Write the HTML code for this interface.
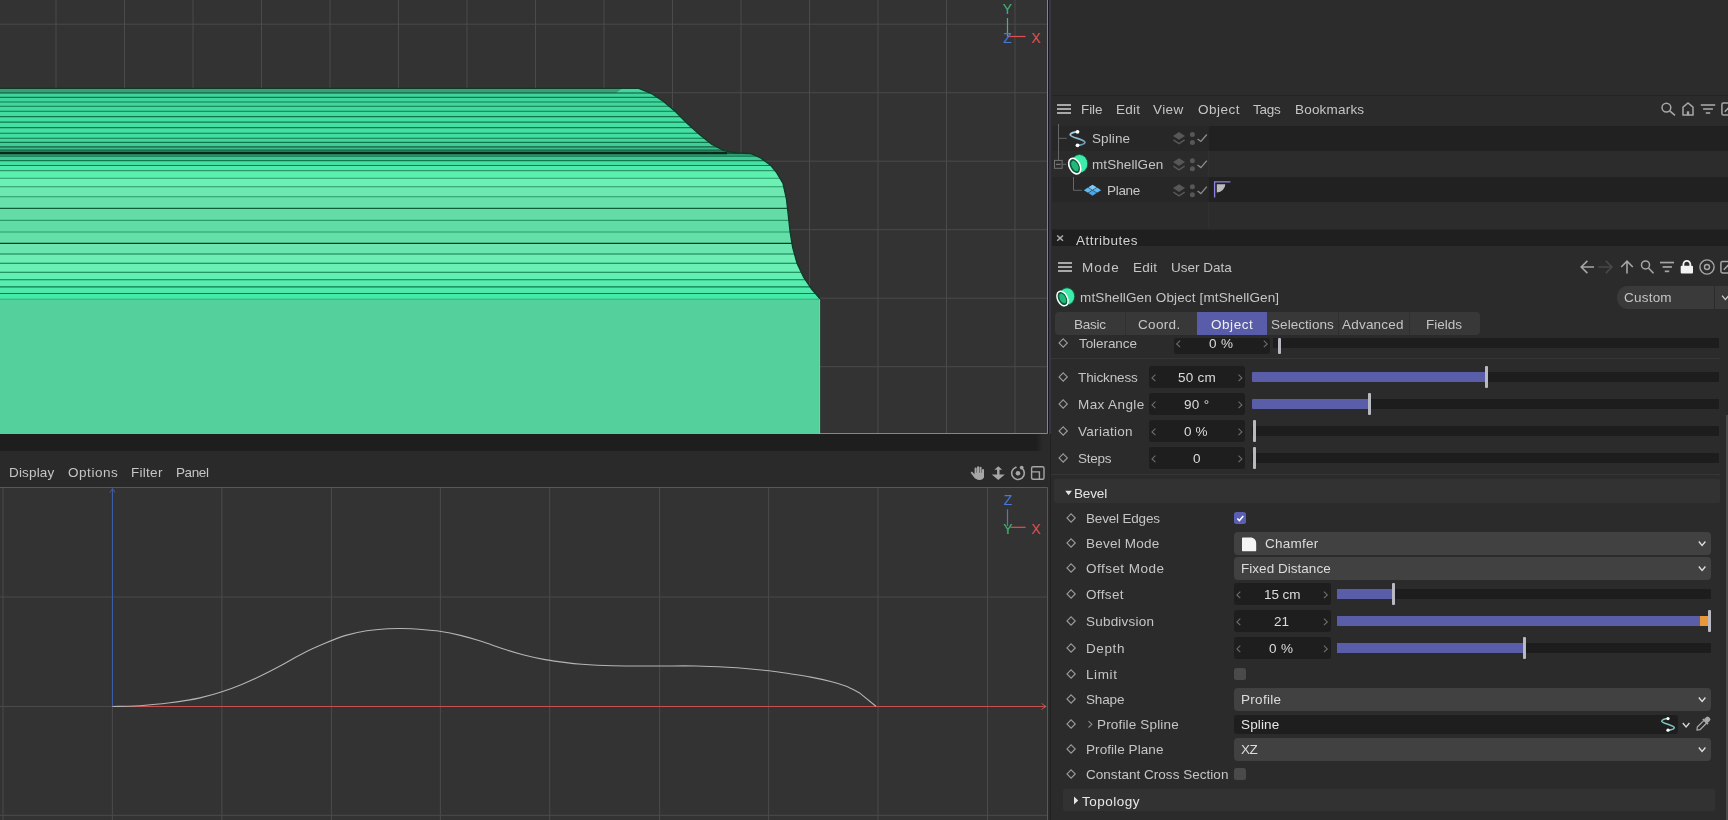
<!DOCTYPE html>
<html lang="en"><head><meta charset="utf-8"><title>Cinema 4D - mtShellGen</title>
<style>
html,body{margin:0;padding:0}
body{width:1728px;height:820px;overflow:hidden;position:relative;background:#2b2b2b;font-family:"Liberation Sans",sans-serif;font-size:13.5px}
.abs{position:absolute;display:block}
.t{position:absolute;white-space:pre;line-height:1;font-family:"Liberation Sans",sans-serif;will-change:transform}
svg text{font-family:"Liberation Sans",sans-serif}
</style></head>
<body>
<svg class="abs" style="left:0;top:0" width="1048" height="434" viewBox="0 0 1048 434">
<rect width="1048" height="434" fill="#333333"/>
<path d="M56.0 0V434 M124.5 0V434 M193.0 0V434 M261.5 0V434 M330.0 0V434 M398.5 0V434 M467.0 0V434 M535.5 0V434 M604.0 0V434 M672.5 0V434 M741.0 0V434 M809.5 0V434 M878.0 0V434 M946.5 0V434 M1015.0 0V434 M0 24.2H1048 M0 92.7H1048 M0 161.2H1048 M0 229.7H1048 M0 298.2H1048 M0 366.7H1048" stroke="#4b4b4b" stroke-width="1" fill="none"/>
<path d="M1047.5 0V433.5H0" fill="none" stroke="#8282a8" stroke-width="1"/>
<defs><clipPath id="sil"><path d="M-2 88.4 L638.8 88.4 L651 93.3 L663.2 101.2 L675.4 111.6 L687.6 123.8 L699.8 134.8 L712 144.5 L724 150.6 L736.3 153 L751 153.7 L760.7 158 L770.5 165.2 L776.6 172.6 L782.9 183.2 L786.4 198.8 L788.2 214.4 L790.1 232 L792.7 247.6 L797 263.2 L803.4 276.8 L811.2 288.5 L820 298.9 L820 434 L-2 434 Z"/></clipPath></defs>
<g clip-path="url(#sil)">
<rect x="-2" y="80" width="830" height="360" fill="#54d09c"/>
<rect x="-2" y="88.4" width="830" height="4.90" fill="#41d69e"/>
<rect x="-2" y="93" width="830" height="4.70" fill="#3fd49c"/>
<rect x="-2" y="97.4" width="830" height="4.90" fill="#3fd69e"/>
<rect x="-2" y="102" width="830" height="4.60" fill="#40d89e"/>
<rect x="-2" y="106.3" width="830" height="5.20" fill="#41da9f"/>
<rect x="-2" y="111.2" width="830" height="5.70" fill="#42dca0"/>
<rect x="-2" y="116.6" width="830" height="5.80" fill="#43dea2"/>
<rect x="-2" y="122.1" width="830" height="5.80" fill="#44dfa3"/>
<rect x="-2" y="127.6" width="830" height="5.90" fill="#44dfa3"/>
<rect x="-2" y="133.2" width="830" height="5.40" fill="#43dca1"/>
<rect x="-2" y="138.3" width="830" height="4.40" fill="#42d69e"/>
<rect x="-2" y="142.4" width="830" height="4.70" fill="#42cc98"/>
<rect x="-2" y="146.8" width="830" height="3.70" fill="#3cbc8c"/>
<rect x="-2" y="150.2" width="830" height="3.10" fill="#2f9a72"/>
<rect x="-2" y="153" width="830" height="3.60" fill="#2f9c74"/>
<rect x="-2" y="156.3" width="830" height="4.60" fill="#3ecb98"/>
<rect x="-2" y="160.6" width="830" height="5.20" fill="#44e0a4"/>
<rect x="-2" y="165.5" width="830" height="5.40" fill="#4ceaac"/>
<rect x="-2" y="170.6" width="830" height="7.90" fill="#5cf0b0"/>
<rect x="-2" y="178.2" width="830" height="8.90" fill="#6cf0b4"/>
<rect x="-2" y="186.8" width="830" height="10.20" fill="#6ce8b0"/>
<rect x="-2" y="196.7" width="830" height="12.00" fill="#68e2ac"/>
<rect x="-2" y="208.4" width="830" height="12.30" fill="#64dca8"/>
<rect x="-2" y="220.4" width="830" height="11.90" fill="#60dca6"/>
<rect x="-2" y="232.0" width="830" height="11.60" fill="#62e0a8"/>
<rect x="-2" y="243.3" width="830" height="11.00" fill="#6ce6b0"/>
<rect x="-2" y="254" width="830" height="9.60" fill="#6eeeb4"/>
<rect x="-2" y="263.3" width="830" height="9.30" fill="#6af0b4"/>
<rect x="-2" y="272.3" width="830" height="7.80" fill="#62f0b2"/>
<rect x="-2" y="279.8" width="830" height="7.40" fill="#56eeb0"/>
<rect x="-2" y="286.9" width="830" height="6.90" fill="#4eeaac"/>
<rect x="-2" y="293.5" width="830" height="6.00" fill="#44eaa8"/>
<path d="M-2 88.4H622L616 93H-2Z" fill="#3a9e76"/>
<path d="M-2 93H830" stroke="#0d5536" stroke-width="1.2"/>
<path d="M-2 97.4H830" stroke="#11784c" stroke-width="1.1"/>
<path d="M-2 102H830" stroke="#11784c" stroke-width="1.1"/>
<path d="M-2 106.3H830" stroke="#11784c" stroke-width="1.1"/>
<path d="M-2 111.2H830" stroke="#11784c" stroke-width="1.1"/>
<path d="M-2 116.6H830" stroke="#11784c" stroke-width="1.1"/>
<path d="M-2 122.1H830" stroke="#11784c" stroke-width="1.1"/>
<path d="M-2 127.6H830" stroke="#11784c" stroke-width="1.1"/>
<path d="M-2 133.2H830" stroke="#11784c" stroke-width="1.1"/>
<path d="M-2 138.3H830" stroke="#11784c" stroke-width="1.1"/>
<path d="M-2 142.4H830" stroke="#11784c" stroke-width="1.1"/>
<path d="M-2 146.8H830" stroke="#14603e" stroke-width="1.2"/>
<path d="M-2 150.2H830" stroke="#14603e" stroke-width="1.2"/>
<path d="M-2 153H727" stroke="#062a1a" stroke-width="2.6"/>
<path d="M727 153H740" stroke="#0c3a26" stroke-width="1.4"/>
<path d="M-2 156.3H830" stroke="#11784c" stroke-width="1.1"/>
<path d="M-2 160.6H830" stroke="#11784c" stroke-width="1.1"/>
<path d="M-2 165.5H830" stroke="#11784c" stroke-width="1.1"/>
<path d="M-2 170.6H830" stroke="#2a9a68" stroke-width="1.1"/>
<path d="M-2 178.2H830" stroke="#2a9a68" stroke-width="1.1"/>
<path d="M-2 186.8H830" stroke="#2a9a68" stroke-width="1.1"/>
<path d="M-2 196.7H830" stroke="#2a9a68" stroke-width="1.1"/>
<path d="M-2 208.4H830" stroke="#0f6038" stroke-width="1.2"/>
<path d="M-2 220.4H830" stroke="#2a9a68" stroke-width="1.1"/>
<path d="M-2 232.0H830" stroke="#2a9a68" stroke-width="1.1"/>
<path d="M-2 243.3H830" stroke="#0b3a22" stroke-width="1.3"/>
<path d="M-2 254H830" stroke="#11784c" stroke-width="1.1"/>
<path d="M-2 263.3H830" stroke="#11784c" stroke-width="1.1"/>
<path d="M-2 272.3H830" stroke="#11784c" stroke-width="1.1"/>
<path d="M-2 279.8H830" stroke="#11784c" stroke-width="1.1"/>
<path d="M-2 286.9H830" stroke="#11784c" stroke-width="1.1"/>
<path d="M-2 293.5H830" stroke="#11784c" stroke-width="1.1"/>
<path d="M-2 299.2H830" stroke="#3aa878" stroke-width="1"/>
</g>
<path d="M-2 88.4 L638.8 88.4 L651 93.3 L663.2 101.2 L675.4 111.6 L687.6 123.8 L699.8 134.8 L712 144.5 L724 150.6 L736.3 153 L751 153.7 L760.7 158 L770.5 165.2 L776.6 172.6 L782.9 183.2 L786.4 198.8 L788.2 214.4 L790.1 232 L792.7 247.6 L797 263.2 L803.4 276.8 L811.2 288.5 L820 298.9" fill="none" stroke="#0c3a26" stroke-width="1.3" stroke-linejoin="round"/>
<path d="M819.6 299.5V434" stroke="#62dcaa" stroke-width="1"/>
<path d="M1007.5 18V36.5" stroke="#3fb67a" stroke-width="1.2"/>
<path d="M1008 36.5H1025.5" stroke="#e05050" stroke-width="1.2"/>
<text x="1007.5" y="13.6" font-size="14" fill="#3fb67a" text-anchor="middle">Y</text>
<text x="1007.5" y="43" font-size="14" fill="#4a78d8" text-anchor="middle">Z</text>
<text x="1036" y="43" font-size="14" fill="#e05050" text-anchor="middle">X</text>
</svg>
<div class="abs" style="left:0px;top:434px;width:1048px;height:16.6px;background:#1e1e1e;background:linear-gradient(to right,#1e1e1e 0,#1e1e1e 1036px,#2a2a2a 1043px)"></div>
<div class="abs" style="left:0px;top:451px;width:1048px;height:36px;background:#2a2a2a;"></div>
<span class="t" style="left:8.80px;top:466.47px;font-size:13.5px;color:#c5c5c5;letter-spacing:0.173px;">Display</span>
<span class="t" style="left:67.50px;top:466.47px;font-size:13.5px;color:#c5c5c5;letter-spacing:0.546px;">Options</span>
<span class="t" style="left:130.70px;top:466.47px;font-size:13.5px;color:#c5c5c5;letter-spacing:0.280px;">Filter</span>
<span class="t" style="left:175.90px;top:466.47px;font-size:13.5px;color:#c5c5c5;letter-spacing:-0.382px;">Panel</span>
<svg class="abs" style="left:968px;top:464px" width="80" height="18" viewBox="968 464 80 18"><rect x="974.6" y="467.6" width="2.05" height="9" rx="1" fill="#a6a6a6"/><rect x="977.05" y="466.2" width="2.05" height="9" rx="1" fill="#a6a6a6"/><rect x="979.5" y="466.7" width="2.05" height="9" rx="1" fill="#a6a6a6"/><rect x="981.95" y="469.0" width="2.05" height="9" rx="1" fill="#a6a6a6"/><path fill="#a6a6a6" d="M974.6 472.8H984V476C984 478.4 982 480 979.4 480C976.6 480 975.3 478.6 974.6 477Z"/><path fill="#a6a6a6" d="M970.9 472.9C970.6 472.2 971.7 471.5 972.3 472.1L975.6 475.4V479L974.2 477.6Z"/><path fill="#a6a6a6" d="M998.3 466.3l3.9 3.5h-2.7v4.6h5.3l-6.5 5.6-6.5-5.6h5.3v-4.6h-2.7z"/><circle cx="1018" cy="473.2" r="2.3" fill="#a6a6a6"/><path d="M1015.9 467.3A6.3 6.3 0 1 0 1021.8 468.2" fill="none" stroke="#a6a6a6" stroke-width="1.6" stroke-linecap="round"/><circle cx="1021.7" cy="467.6" r="1.9" fill="#a6a6a6"/><rect x="1031.6" y="466.7" width="12.4" height="12.5" rx="1.5" fill="none" stroke="#a6a6a6" stroke-width="1.4"/><path d="M1032 471.9H1039.4V479" fill="none" stroke="#a6a6a6" stroke-width="1.4"/></svg>
<svg class="abs" style="left:0;top:487px" width="1048" height="333" viewBox="0 487 1048 333">
<rect x="0" y="487" width="1048" height="333" fill="#333333"/>
<path d="M3.0 487V820 M112.4 487V820 M221.9 487V820 M331.4 487V820 M440.4 487V820 M549.7 487V820 M659.6 487V820 M768.6 487V820 M878 487V820 M987.5 487V820 M0 597H1048 M0 706.5H1048 M0 815.3H1048" stroke="#4b4b4b" stroke-width="1" fill="none"/>
<path d="M0 487.5H1047.5V820" stroke="#585858" stroke-width="1" fill="none"/>
<path d="M112.5 706.5V489" stroke="#3a5fa8" stroke-width="1.1"/>
<path d="M109.8 492.5L112.5 488.6L115.2 492.5" stroke="#3a5fa8" stroke-width="1" fill="none"/>
<path d="M112.5 706.5H1046" stroke="#c85050" stroke-width="1.1"/>
<path d="M1041.5 703.4L1046 706.5L1041.5 709.4" stroke="#c85050" stroke-width="1" fill="none"/>
<path d="M112.4 706.5 C116.2 706.4 128.2 706.3 135 706 C141.8 705.7 147.2 705.0 153 704.5 C158.8 704.0 164.7 703.4 170 702.7 C175.3 702.1 180.0 701.4 185 700.6 C190.0 699.8 193.8 699.4 200 697.9 C206.2 696.4 215.0 694.0 221.9 691.7 C228.8 689.5 234.9 687.2 241.7 684.4 C248.5 681.6 255.6 678.4 262.5 675 C269.4 671.6 276.4 667.9 283.3 664.2 C290.2 660.5 297.2 656.2 304.2 652.7 C311.1 649.2 318.1 646.2 325 643.3 C331.9 640.4 338.9 637.5 345.8 635.4 C352.8 633.3 359.8 631.9 366.7 630.8 C373.6 629.7 381.6 629.1 387.5 628.75 C393.4 628.4 396.9 628.4 402.1 628.5 C407.3 628.6 412.5 628.7 418.75 629.2 C425.0 629.7 432.7 630.2 439.6 631.25 C446.5 632.3 453.5 633.7 460.4 635.4 C467.3 637.1 474.3 639.1 481.25 641.25 C488.2 643.4 495.2 646.2 502.1 648.5 C509.0 650.8 516.0 653.0 522.9 654.8 C529.8 656.6 537.4 658.2 543.75 659.4 C550.1 660.6 554.5 661.1 560.8 661.9 C567.1 662.7 573.0 663.6 581.7 664.2 C590.4 664.9 600.1 665.5 612.9 665.8 C625.7 666.1 644.9 666.0 658.75 666 C672.6 666.0 684.8 665.8 696.25 666 C707.7 666.2 718.8 666.8 727.5 667.3 C736.2 667.8 741.3 668.2 748.3 668.75 C755.2 669.3 762.2 670.0 769.2 670.8 C776.2 671.6 783.1 672.7 790 673.75 C796.9 674.8 803.8 675.8 810.8 677.1 C817.8 678.4 825.8 680.2 831.7 681.7 C837.6 683.2 841.6 684.4 846.25 686.25 C850.9 688.1 857.5 692.0 859.8 693.1 L875.9 706.3" stroke="#b4b4b4" stroke-width="1.1" fill="none"/>
<path d="M1007.5 509.3V526" stroke="#4a78d8" stroke-width="1.2"/>
<path d="M1010.3 527.3H1025.6" stroke="#e05050" stroke-width="1.2"/>
<text x="1008" y="504.8" font-size="14" fill="#4a78d8" text-anchor="middle">Z</text>
<text x="1008" y="533.6" font-size="14" fill="#3fb67a" text-anchor="middle">Y</text>
<text x="1036" y="533.6" font-size="14" fill="#e05050" text-anchor="middle">X</text>
</svg>
<div class="abs" style="left:1048px;top:0px;width:1.2px;height:434px;background:#17172a;"></div>
<div class="abs" style="left:1049.2px;top:0px;width:2.1px;height:434px;background:#38383c;"></div>
<div class="abs" style="left:1048px;top:434px;width:2px;height:386px;background:#2b2b2b;"></div>
<div class="abs" style="left:1050px;top:434px;width:1.4px;height:386px;background:#212121;"></div>
<div class="abs" style="left:1051.3px;top:0px;width:676.7px;height:95px;background:#2c2c2c;"></div>
<div class="abs" style="left:1051.5px;top:95px;width:676.5px;height:1px;background:#242424;"></div>
<div class="abs" style="left:1051.5px;top:96px;width:676.5px;height:29.5px;background:#2b2b2b;"></div>
<svg class="abs" style="left:1056px;top:103px" width="18" height="14" viewBox="1056 103 18 14"><rect x="1057" y="104.00" width="14" height="2" fill="#a8a8a8"/><rect x="1057" y="108.00" width="14" height="2" fill="#a8a8a8"/><rect x="1057" y="112.00" width="14" height="2" fill="#a8a8a8"/></svg>
<span class="t" style="left:1080.60px;top:102.87px;font-size:13.5px;color:#c5c5c5;letter-spacing:-0.084px;">File</span>
<span class="t" style="left:1115.70px;top:102.87px;font-size:13.5px;color:#c5c5c5;letter-spacing:0.279px;">Edit</span>
<span class="t" style="left:1153.40px;top:102.87px;font-size:13.5px;color:#c5c5c5;letter-spacing:0.428px;">View</span>
<span class="t" style="left:1197.80px;top:102.87px;font-size:13.5px;color:#c5c5c5;letter-spacing:0.477px;">Object</span>
<span class="t" style="left:1252.60px;top:102.87px;font-size:13.5px;color:#c5c5c5;letter-spacing:-0.272px;">Tags</span>
<span class="t" style="left:1294.60px;top:102.87px;font-size:13.5px;color:#c5c5c5;letter-spacing:0.197px;">Bookmarks</span>
<svg class="abs" style="left:1658px;top:100px" width="70" height="18" viewBox="1658 100 70 18"><circle cx="1666.4" cy="107.6" r="4.4" fill="none" stroke="#a6a6a6" stroke-width="1.5"/><path d="M1669.7 110.9L1675 115.4" stroke="#a6a6a6" stroke-width="1.6"/><path d="M1683 115V107.1L1688 102.9L1693 107.1V115Z" fill="none" stroke="#a6a6a6" stroke-width="1.5" stroke-linejoin="miter"/><rect x="1686.8" y="111.3" width="2.4" height="4" fill="#a6a6a6"/><rect x="1700.8" y="104.2" width="14.4" height="1.6" fill="#a6a6a6"/><rect x="1703.1" y="108.2" width="9.8" height="1.6" fill="#a6a6a6"/><rect x="1705.8" y="112.2" width="4.4" height="1.6" fill="#a6a6a6"/><path d="M1729 103.1H1723.5a1.6 1.6 0 0 0 -1.6 1.6V113.4a1.6 1.6 0 0 0 1.6 1.6H1729" fill="none" stroke="#a6a6a6" stroke-width="1.5"/><path d="M1724.8 111.8L1729 107.4" stroke="#a6a6a6" stroke-width="1.6"/></svg>
<div class="abs" style="left:1051.5px;top:125.5px;width:157px;height:25.19999999999999px;background:#272727;"></div>
<div class="abs" style="left:1208.5px;top:125.5px;width:519.5px;height:25.19999999999999px;background:#212121;"></div>
<div class="abs" style="left:1051.5px;top:150.7px;width:157px;height:25.900000000000006px;background:#2b2b2b;"></div>
<div class="abs" style="left:1208.5px;top:150.7px;width:519.5px;height:25.900000000000006px;background:#2c2c2c;"></div>
<div class="abs" style="left:1051.5px;top:176.6px;width:157px;height:25.80000000000001px;background:#272727;"></div>
<div class="abs" style="left:1208.5px;top:176.6px;width:519.5px;height:25.80000000000001px;background:#212121;"></div>
<div class="abs" style="left:1051.5px;top:202.4px;width:157px;height:26.19999999999999px;background:#2b2b2b;"></div>
<div class="abs" style="left:1208.5px;top:202.4px;width:519.5px;height:26.19999999999999px;background:#2c2c2c;"></div>
<div class="abs" style="left:1208px;top:150.7px;width:1px;height:25.9px;background:#303030;"></div>
<div class="abs" style="left:1208px;top:202.4px;width:1px;height:26.2px;background:#303030;"></div>
<span class="t" style="left:1091.90px;top:131.67px;font-size:13.5px;color:#c5c5c5;letter-spacing:0.115px;">Spline</span>
<span class="t" style="left:1091.90px;top:157.87px;font-size:13.5px;color:#c5c5c5;letter-spacing:0.085px;">mtShellGen</span>
<span class="t" style="left:1107.30px;top:183.57px;font-size:13.5px;color:#c5c5c5;letter-spacing:-0.307px;">Plane</span>
<div class="abs" style="left:1051.5px;top:228.6px;width:676.5px;height:1.2px;background:#262626;"></div>
<div class="abs" style="left:1051.5px;top:229.8px;width:676.5px;height:15.8px;background:#1f1f1f;"></div>
<div class="abs" style="left:1051.5px;top:245.6px;width:676.5px;height:574.4px;background:#2b2b2b;"></div>
<span class="t" style="left:1075.80px;top:234.47px;font-size:13.5px;color:#d2d2d2;letter-spacing:0.497px;">Attributes</span>
<svg class="abs" style="left:1057px;top:261px" width="18" height="14" viewBox="1057 261 18 14"><rect x="1058" y="262.00" width="14" height="2" fill="#a8a8a8"/><rect x="1058" y="266.00" width="14" height="2" fill="#a8a8a8"/><rect x="1058" y="270.00" width="14" height="2" fill="#a8a8a8"/></svg>
<span class="t" style="left:1081.80px;top:260.67px;font-size:13.5px;color:#c5c5c5;letter-spacing:1.010px;">Mode</span>
<span class="t" style="left:1132.90px;top:260.67px;font-size:13.5px;color:#c5c5c5;letter-spacing:0.212px;">Edit</span>
<span class="t" style="left:1170.90px;top:260.67px;font-size:13.5px;color:#c5c5c5;letter-spacing:0.004px;">User Data</span>
<svg class="abs" style="left:1578px;top:258px" width="150" height="18" viewBox="1578 258 150 18"><path d="M1594 267H1581.2M1587.4 260.9L1581.2 267L1587.4 273.1" fill="none" stroke="#a6a6a6" stroke-width="1.6"/><path d="M1598.4 267H1612M1605.8 260.9L1612 267L1605.8 273.1" fill="none" stroke="#484848" stroke-width="1.6"/><path d="M1627 273.6V261.2M1621.2 267L1627 261.2L1632.8 267" fill="none" stroke="#a6a6a6" stroke-width="1.6"/><circle cx="1645.5" cy="264.9" r="4" fill="none" stroke="#a6a6a6" stroke-width="1.5"/><path d="M1648.5 268L1653.5 273.2" stroke="#a6a6a6" stroke-width="1.6"/><rect x="1660" y="261.7" width="14" height="1.7" fill="#a6a6a6"/><rect x="1662.6" y="266.1" width="9.3" height="1.7" fill="#a6a6a6"/><rect x="1664.8" y="270.5" width="4.4" height="1.7" fill="#a6a6a6"/><rect x="1680.7" y="265.7" width="12.3" height="7.9" rx="1" fill="#f2f2f2"/><path d="M1683.4 266V264.3a3.45 3.45 0 0 1 6.9 0V266" fill="none" stroke="#f2f2f2" stroke-width="1.8"/><circle cx="1707" cy="267" r="7.1" fill="none" stroke="#a6a6a6" stroke-width="1.4"/><circle cx="1707" cy="267" r="2.5" fill="none" stroke="#a6a6a6" stroke-width="1.4"/><path d="M1729 261.5H1722.5a1.6 1.6 0 0 0 -1.6 1.6V271.3a1.6 1.6 0 0 0 1.6 1.6H1729" fill="none" stroke="#a6a6a6" stroke-width="1.5"/><path d="M1723.8 269.8L1729 264.4" stroke="#a6a6a6" stroke-width="1.6"/></svg>
<span class="t" style="left:1080.10px;top:291.07px;font-size:13.5px;color:#c5c5c5;letter-spacing:0.138px;">mtShellGen Object [mtShellGen]</span>
<div class="abs" style="left:1617px;top:286px;width:111px;height:22.7px;background:#3a3a3a;border-radius:11px 0 0 11px"></div>
<div class="abs" style="left:1714.2px;top:286px;width:1px;height:22.7px;background:#2b2b2b;"></div>
<span class="t" style="left:1623.90px;top:291.07px;font-size:13.5px;color:#c5c5c5;letter-spacing:0.218px;">Custom</span>
<div class="abs" style="left:1054.8px;top:312.2px;width:425.4px;height:22.6px;background:#383838;border-radius:4px"></div>
<span class="t" style="left:1073.70px;top:317.67px;font-size:13.5px;color:#c5c5c5;letter-spacing:-0.278px;">Basic</span>
<div class="abs" style="left:1125.1px;top:312.2px;width:1px;height:22.6px;background:#303030;"></div>
<span class="t" style="left:1138.40px;top:317.67px;font-size:13.5px;color:#c5c5c5;letter-spacing:0.336px;">Coord.</span>
<div class="abs" style="left:1196.6px;top:312.2px;width:70.60000000000014px;height:22.6px;background:#595ca8;"></div>
<span class="t" style="left:1210.50px;top:317.67px;font-size:13.5px;color:#f0f0f0;letter-spacing:0.557px;">Object</span>
<span class="t" style="left:1270.60px;top:317.67px;font-size:13.5px;color:#c5c5c5;letter-spacing:0.057px;">Selections</span>
<div class="abs" style="left:1338.3px;top:312.2px;width:1px;height:22.6px;background:#303030;"></div>
<span class="t" style="left:1341.60px;top:317.67px;font-size:13.5px;color:#c5c5c5;letter-spacing:0.208px;">Advanced</span>
<div class="abs" style="left:1409.2px;top:312.2px;width:1px;height:22.6px;background:#303030;"></div>
<span class="t" style="left:1425.60px;top:317.67px;font-size:13.5px;color:#c5c5c5;letter-spacing:-0.022px;">Fields</span>
<span class="t" style="left:1078.50px;top:336.77px;font-size:13.5px;color:#c5c5c5;letter-spacing:-0.067px;">Tolerance</span>
<div class="abs" style="left:1174.3px;top:337.7px;width:95.6px;height:16.7px;background:#1e1e1e;border-radius:3px"></div>
<span class="t" style="left:1209.40px;top:336.77px;font-size:13.5px;color:#dcdcdc;letter-spacing:0.319px;">0 %</span>
<div class="abs" style="left:1272.5px;top:338.2px;width:446px;height:9.6px;background:#1d1d1d;"></div>
<div class="abs" style="left:1277.9px;top:337.6px;width:3px;height:16.4px;background:#b9b9c2;border-radius:1px"></div>
<div class="abs" style="left:1051.4px;top:358.4px;width:668.6px;height:1px;background:#363636;"></div>
<span class="t" style="left:1078.00px;top:370.87px;font-size:13.5px;color:#c5c5c5;letter-spacing:-0.121px;">Thickness</span>
<div class="abs" style="left:1149.4px;top:366.40000000000003px;width:95.6px;height:21.8px;background:#1e1e1e;border-radius:3px"></div>
<span class="t" style="left:1177.70px;top:370.87px;font-size:13.5px;color:#dcdcdc;letter-spacing:0.259px;">50 cm</span>
<div class="abs" style="left:1252px;top:372.40000000000003px;width:466.5px;height:9.8px;background:#1d1d1d;border-radius:1px"></div>
<div class="abs" style="left:1252px;top:372.40000000000003px;width:233.5px;height:9.8px;background:#5a5ea9;border-radius:1px 0 0 1px"></div>
<div class="abs" style="left:1485px;top:366.40000000000003px;width:3px;height:21.8px;background:#b9b9c2;border-radius:1px"></div>
<span class="t" style="left:1078.00px;top:397.87px;font-size:13.5px;color:#c5c5c5;letter-spacing:0.395px;">Max Angle</span>
<div class="abs" style="left:1149.4px;top:393.40000000000003px;width:95.6px;height:21.8px;background:#1e1e1e;border-radius:3px"></div>
<span class="t" style="left:1183.60px;top:397.87px;font-size:13.5px;color:#dcdcdc;letter-spacing:0.311px;">90 °</span>
<div class="abs" style="left:1252px;top:399.40000000000003px;width:466.5px;height:9.8px;background:#1d1d1d;border-radius:1px"></div>
<div class="abs" style="left:1252px;top:399.40000000000003px;width:116.29999999999995px;height:9.8px;background:#5a5ea9;border-radius:1px 0 0 1px"></div>
<div class="abs" style="left:1367.9px;top:393.40000000000003px;width:3px;height:21.8px;background:#b9b9c2;border-radius:1px"></div>
<span class="t" style="left:1078.00px;top:424.87px;font-size:13.5px;color:#c5c5c5;letter-spacing:0.290px;">Variation</span>
<div class="abs" style="left:1149.4px;top:420.40000000000003px;width:95.6px;height:21.8px;background:#1e1e1e;border-radius:3px"></div>
<span class="t" style="left:1184.40px;top:424.87px;font-size:13.5px;color:#dcdcdc;letter-spacing:0.119px;">0 %</span>
<div class="abs" style="left:1252px;top:426.40000000000003px;width:466.5px;height:9.8px;background:#1d1d1d;border-radius:1px"></div>
<div class="abs" style="left:1253px;top:420.40000000000003px;width:3px;height:21.8px;background:#b9b9c2;border-radius:1px"></div>
<span class="t" style="left:1078.00px;top:451.87px;font-size:13.5px;color:#c5c5c5;letter-spacing:-0.230px;">Steps</span>
<div class="abs" style="left:1149.4px;top:447.40000000000003px;width:95.6px;height:21.8px;background:#1e1e1e;border-radius:3px"></div>
<span class="t" style="left:1192.60px;top:451.87px;font-size:13.5px;color:#dcdcdc;letter-spacing:0.692px;">0</span>
<div class="abs" style="left:1252px;top:453.40000000000003px;width:466.5px;height:9.8px;background:#1d1d1d;border-radius:1px"></div>
<div class="abs" style="left:1253px;top:447.40000000000003px;width:3px;height:21.8px;background:#b9b9c2;border-radius:1px"></div>
<div class="abs" style="left:1051.4px;top:474.2px;width:668.6px;height:1px;background:#363636;"></div>
<div class="abs" style="left:1054.3px;top:479.2px;width:665.5px;height:23.4px;background:#323232;border-radius:2px"></div>
<span class="t" style="left:1073.70px;top:486.87px;font-size:13.5px;color:#e4e4e4;letter-spacing:-0.143px;">Bevel</span>
<span class="t" style="left:1085.80px;top:511.87px;font-size:13.5px;color:#c5c5c5;letter-spacing:-0.180px;">Bevel Edges</span>
<div class="abs" style="left:1234.3px;top:512.4px;width:11.8px;height:11.8px;background:#5b5fb4;border-radius:2.5px"></div>
<span class="t" style="left:1085.80px;top:536.87px;font-size:13.5px;color:#c5c5c5;letter-spacing:0.223px;">Bevel Mode</span>
<div class="abs" style="left:1234.2px;top:532.0px;width:477px;height:22.6px;background:#414141;border-radius:4px"></div>
<span class="t" style="left:1264.90px;top:536.87px;font-size:13.5px;color:#dcdcdc;letter-spacing:0.239px;">Chamfer</span>
<span class="t" style="left:1085.80px;top:561.87px;font-size:13.5px;color:#c5c5c5;letter-spacing:0.471px;">Offset Mode</span>
<div class="abs" style="left:1234.2px;top:557.0px;width:477px;height:22.6px;background:#414141;border-radius:4px"></div>
<span class="t" style="left:1240.70px;top:561.87px;font-size:13.5px;color:#dcdcdc;letter-spacing:0.032px;">Fixed Distance</span>
<span class="t" style="left:1085.80px;top:587.87px;font-size:13.5px;color:#c5c5c5;letter-spacing:0.367px;">Offset</span>
<div class="abs" style="left:1234.2px;top:583.4px;width:96.4px;height:21.8px;background:#1e1e1e;border-radius:3px"></div>
<span class="t" style="left:1263.70px;top:587.87px;font-size:13.5px;color:#dcdcdc;letter-spacing:-0.066px;">15 cm</span>
<div class="abs" style="left:1337px;top:589.4px;width:373.5px;height:9.8px;background:#1d1d1d;border-radius:1px"></div>
<div class="abs" style="left:1337px;top:589.4px;width:55.5px;height:9.8px;background:#5a5ea9;"></div>
<div class="abs" style="left:1392px;top:583.4px;width:3px;height:21.8px;background:#b9b9c2;border-radius:1px"></div>
<span class="t" style="left:1085.80px;top:614.87px;font-size:13.5px;color:#c5c5c5;letter-spacing:0.206px;">Subdivsion</span>
<div class="abs" style="left:1234.2px;top:610.4px;width:96.4px;height:21.8px;background:#1e1e1e;border-radius:3px"></div>
<span class="t" style="left:1273.50px;top:614.87px;font-size:13.5px;color:#dcdcdc;letter-spacing:-0.116px;">21</span>
<div class="abs" style="left:1337px;top:616.4px;width:373.5px;height:9.8px;background:#1d1d1d;border-radius:1px"></div>
<div class="abs" style="left:1337px;top:616.4px;width:363px;height:9.8px;background:#5a5ea9;"></div>
<div class="abs" style="left:1699.8px;top:616.4px;width:8.200000000000045px;height:9.8px;background:#e8983a;"></div>
<div class="abs" style="left:1707.8px;top:610.4px;width:3px;height:21.8px;background:#b9b9c2;border-radius:1px"></div>
<span class="t" style="left:1085.80px;top:641.87px;font-size:13.5px;color:#c5c5c5;letter-spacing:0.619px;">Depth</span>
<div class="abs" style="left:1234.2px;top:637.4px;width:96.4px;height:21.8px;background:#1e1e1e;border-radius:3px"></div>
<span class="t" style="left:1269.20px;top:641.87px;font-size:13.5px;color:#dcdcdc;letter-spacing:0.369px;">0 %</span>
<div class="abs" style="left:1337px;top:643.4px;width:373.5px;height:9.8px;background:#1d1d1d;border-radius:1px"></div>
<div class="abs" style="left:1337px;top:643.4px;width:186.20000000000005px;height:9.8px;background:#5a5ea9;"></div>
<div class="abs" style="left:1523px;top:637.4px;width:3px;height:21.8px;background:#b9b9c2;border-radius:1px"></div>
<span class="t" style="left:1085.80px;top:667.87px;font-size:13.5px;color:#c5c5c5;letter-spacing:0.599px;">Limit</span>
<div class="abs" style="left:1234.3px;top:668.4px;width:11.8px;height:11.8px;background:#4a4a4a;border-radius:2.5px"></div>
<span class="t" style="left:1085.80px;top:692.87px;font-size:13.5px;color:#c5c5c5;letter-spacing:-0.134px;">Shape</span>
<div class="abs" style="left:1234.2px;top:688.0px;width:477px;height:22.6px;background:#414141;border-radius:4px"></div>
<span class="t" style="left:1240.70px;top:692.87px;font-size:13.5px;color:#dcdcdc;letter-spacing:0.306px;">Profile</span>
<span class="t" style="left:1096.90px;top:717.87px;font-size:13.5px;color:#c5c5c5;letter-spacing:0.166px;">Profile Spline</span>
<div class="abs" style="left:1234.2px;top:714.8px;width:444.2px;height:19.6px;background:#1e1e1e;border-radius:3px"></div>
<span class="t" style="left:1240.70px;top:717.87px;font-size:13.5px;color:#e6e6e6;letter-spacing:0.135px;">Spline</span>
<span class="t" style="left:1085.80px;top:742.87px;font-size:13.5px;color:#c5c5c5;letter-spacing:0.071px;">Profile Plane</span>
<div class="abs" style="left:1234.2px;top:738.0px;width:477px;height:22.6px;background:#414141;border-radius:4px"></div>
<span class="t" style="left:1240.70px;top:742.87px;font-size:13.5px;color:#dcdcdc;letter-spacing:-0.551px;">XZ</span>
<span class="t" style="left:1085.80px;top:767.87px;font-size:13.5px;color:#c5c5c5;letter-spacing:0.028px;">Constant Cross Section</span>
<div class="abs" style="left:1234.3px;top:768.4px;width:11.8px;height:11.8px;background:#4a4a4a;border-radius:2.5px"></div>
<div class="abs" style="left:1062.7px;top:789.2px;width:652px;height:22px;background:#323232;border-radius:2px"></div>
<span class="t" style="left:1082.10px;top:794.87px;font-size:13.5px;color:#e8e8e8;letter-spacing:0.509px;">Topology</span>
<div class="abs" style="left:1725.6px;top:414.5px;width:3px;height:406px;background:#4a4a4a;"></div>
<svg class="abs" style="left:0;top:0;pointer-events:none" width="1728" height="820" viewBox="0 0 1728 820"><path d="M1058.5 124V160M1058.5 138.3H1066.8M1062.4 164.3H1066.4M1073.5 177V190.3H1081.8" fill="none" stroke="#666666" stroke-width="1"/><rect x="1054.5" y="160.4" width="7.6" height="7.9" fill="none" stroke="#747474" stroke-width="1"/><path d="M1056 164.3H1060.7" stroke="#8a8a8a" stroke-width="1"/><defs><linearGradient id="sg" x1="0" y1="0" x2="0" y2="1"><stop offset="0" stop-color="#a9d6ec"/><stop offset="1" stop-color="#5f97b0"/></linearGradient></defs><g transform="translate(1077.5 138.5) scale(1.0)"><path d="M0 -6.7C-3 -6.6 -7.2 -5.4 -7.3 -3.6C-7.4 -1.2 7.4 1.2 7.4 3.8C7.3 5.6 3 6.6 0 6.8" fill="none" stroke="url(#sg)" stroke-width="1.8" stroke-linecap="round"/><circle cx="0" cy="-6.7" r="1.9" fill="#ffffff"/><circle cx="0" cy="6.8" r="1.9" fill="#ffffff"/></g><g transform="translate(1077.6 164.3)"><ellipse cx="1.9" cy="-0.6" rx="8.3" ry="9.2" fill="#3eecaa" stroke="#0a5a3c" stroke-width="0.9"/><ellipse cx="-2.9" cy="1.8" rx="5.3" ry="8.3" transform="rotate(-27 -2.9 1.8)" fill="#0b5c3c" stroke="#ffffff" stroke-width="1.6"/><ellipse cx="-2.7" cy="1.6" rx="3.1" ry="5.6" transform="rotate(-27 -2.7 1.6)" fill="#22b87a"/></g><path d="M1092.5 184.725L1096.6 187.35L1092.5 189.975L1088.4 187.35Z" fill="#7acdf8"/><path d="M1087.95 187.575L1092.05 190.2L1087.95 192.825L1083.8500000000001 190.2Z" fill="#5fb8f0"/><path d="M1097.05 187.575L1101.1499999999999 190.2L1097.05 192.825L1092.95 190.2Z" fill="#5fb8f0"/><path d="M1092.5 190.42499999999998L1096.6 193.04999999999998L1092.5 195.67499999999998L1088.4 193.04999999999998Z" fill="#4aa6e6"/><path d="M1173 135.9L1179 132.1L1185 135.9L1179 139.8Z" fill="#575757"/><path d="M1173.4 139.9L1179 143.6L1184.6 139.9" fill="none" stroke="#575757" stroke-width="1.5"/><circle cx="1192.4" cy="134.5" r="2.5" fill="#575757"/><circle cx="1192.4" cy="142.5" r="2.5" fill="#575757"/><path d="M1197.6 138.9L1200.9 141.4L1206.8 134.5" fill="none" stroke="#8e8e8e" stroke-width="1.3"/><path d="M1173 162.10000000000002L1179 158.3L1185 162.10000000000002L1179 166.00000000000003Z" fill="#575757"/><path d="M1173.4 166.10000000000002L1179 169.8L1184.6 166.10000000000002" fill="none" stroke="#575757" stroke-width="1.5"/><circle cx="1192.4" cy="160.70000000000002" r="2.5" fill="#575757"/><circle cx="1192.4" cy="168.70000000000002" r="2.5" fill="#575757"/><path d="M1197.6 165.10000000000002L1200.9 167.60000000000002L1206.8 160.70000000000002" fill="none" stroke="#8e8e8e" stroke-width="1.3"/><path d="M1173 188.10000000000002L1179 184.3L1185 188.10000000000002L1179 192.00000000000003Z" fill="#575757"/><path d="M1173.4 192.10000000000002L1179 195.8L1184.6 192.10000000000002" fill="none" stroke="#575757" stroke-width="1.5"/><circle cx="1192.4" cy="186.70000000000002" r="2.5" fill="#575757"/><circle cx="1192.4" cy="194.70000000000002" r="2.5" fill="#575757"/><path d="M1197.6 191.10000000000002L1200.9 193.60000000000002L1206.8 186.70000000000002" fill="none" stroke="#8e8e8e" stroke-width="1.3"/><path d="M1216.8 184.2H1225.3A8.3 8.3 0 0 1 1216.8 192.4Z" fill="#bcbcbc"/><path d="M1214.6 197.4V181.8H1230.4" fill="none" stroke="#8c82e4" stroke-width="1.3"/><path d="M1057.2 235.5L1063 240.8M1063 235.5L1057.2 240.8" stroke="#b0b0b0" stroke-width="1.5"/><g transform="translate(1065.2 296.9) scale(0.93)"><g transform="translate(0 0)"><ellipse cx="1.9" cy="-0.6" rx="8.3" ry="9.2" fill="#3eecaa" stroke="#0a5a3c" stroke-width="0.9"/><ellipse cx="-2.9" cy="1.8" rx="5.3" ry="8.3" transform="rotate(-27 -2.9 1.8)" fill="#0b5c3c" stroke="#ffffff" stroke-width="1.6"/><ellipse cx="-2.7" cy="1.6" rx="3.1" ry="5.6" transform="rotate(-27 -2.7 1.6)" fill="#22b87a"/></g></g><path d="M1722.1000000000001 295.6L1725.4 299.6L1728.7 295.6" fill="none" stroke="#d0d0d0" stroke-width="1.3"/><path d="M1063.2 338.84999999999997L1067.3 342.95L1063.2 347.05L1059.1000000000001 342.95Z" fill="none" stroke="#9a9a9a" stroke-width="1.2"/><path d="M1180.1000000000001 340.70000000000005L1176.7 343.90000000000003L1180.1000000000001 347.1" fill="none" stroke="#6e6e6e" stroke-width="1.1"/><path d="M1263.8 340.70000000000005L1267.2 343.90000000000003L1263.8 347.1" fill="none" stroke="#6e6e6e" stroke-width="1.1"/><path d="M1063.1999999999998 372.84999999999997L1067.2999999999997 376.95L1063.1999999999998 381.05L1059.1 376.95Z" fill="none" stroke="#9a9a9a" stroke-width="1.2"/><path d="M1155.4 374.70000000000005L1152.0 377.90000000000003L1155.4 381.1" fill="none" stroke="#6e6e6e" stroke-width="1.1"/><path d="M1238.5 374.70000000000005L1241.9 377.90000000000003L1238.5 381.1" fill="none" stroke="#6e6e6e" stroke-width="1.1"/><path d="M1063.1999999999998 399.84999999999997L1067.2999999999997 403.95L1063.1999999999998 408.05L1059.1 403.95Z" fill="none" stroke="#9a9a9a" stroke-width="1.2"/><path d="M1155.4 401.70000000000005L1152.0 404.90000000000003L1155.4 408.1" fill="none" stroke="#6e6e6e" stroke-width="1.1"/><path d="M1238.5 401.70000000000005L1241.9 404.90000000000003L1238.5 408.1" fill="none" stroke="#6e6e6e" stroke-width="1.1"/><path d="M1063.1999999999998 426.84999999999997L1067.2999999999997 430.95L1063.1999999999998 435.05L1059.1 430.95Z" fill="none" stroke="#9a9a9a" stroke-width="1.2"/><path d="M1155.4 428.70000000000005L1152.0 431.90000000000003L1155.4 435.1" fill="none" stroke="#6e6e6e" stroke-width="1.1"/><path d="M1238.5 428.70000000000005L1241.9 431.90000000000003L1238.5 435.1" fill="none" stroke="#6e6e6e" stroke-width="1.1"/><path d="M1063.1999999999998 453.84999999999997L1067.2999999999997 457.95L1063.1999999999998 462.05L1059.1 457.95Z" fill="none" stroke="#9a9a9a" stroke-width="1.2"/><path d="M1155.4 455.70000000000005L1152.0 458.90000000000003L1155.4 462.1" fill="none" stroke="#6e6e6e" stroke-width="1.1"/><path d="M1238.5 455.70000000000005L1241.9 458.90000000000003L1238.5 462.1" fill="none" stroke="#6e6e6e" stroke-width="1.1"/><path d="M1065.3 490.8H1071.9L1068.6 495.3Z" fill="#e6e6e6"/><path d="M1071.1 513.8499999999999L1075.1999999999998 517.9499999999999L1071.1 522.05L1067.0 517.9499999999999Z" fill="none" stroke="#9a9a9a" stroke-width="1.2"/><path d="M1237.3 518.5L1239.4 520.5999999999999L1243.3 516.0999999999999" fill="none" stroke="#ffffff" stroke-width="1.5"/><path d="M1071.1 538.8499999999999L1075.1999999999998 542.9499999999999L1071.1 547.05L1067.0 542.9499999999999Z" fill="none" stroke="#9a9a9a" stroke-width="1.2"/><path d="M1698.8 541.5L1702.1 545.5L1705.3999999999999 541.5" fill="none" stroke="#e0e0e0" stroke-width="1.3"/><path d="M1242 538V550.6a.6 .6 0 0 0 .6 .6H1255.6a.6 .6 0 0 0 .6-.6V543.5C1256.2 540 1254 537.6 1250.5 537.6H1242.6a.6 .6 0 0 0 -.6 .4Z" fill="#f4f4f4"/><path d="M1071.1 563.8499999999999L1075.1999999999998 567.9499999999999L1071.1 572.05L1067.0 567.9499999999999Z" fill="none" stroke="#9a9a9a" stroke-width="1.2"/><path d="M1698.8 566.5L1702.1 570.5L1705.3999999999999 566.5" fill="none" stroke="#e0e0e0" stroke-width="1.3"/><path d="M1071.1 589.8499999999999L1075.1999999999998 593.9499999999999L1071.1 598.05L1067.0 593.9499999999999Z" fill="none" stroke="#9a9a9a" stroke-width="1.2"/><path d="M1240.3 591.6999999999999L1236.8999999999999 594.9L1240.3 598.1" fill="none" stroke="#6e6e6e" stroke-width="1.1"/><path d="M1323.8999999999999 591.6999999999999L1327.3 594.9L1323.8999999999999 598.1" fill="none" stroke="#6e6e6e" stroke-width="1.1"/><path d="M1071.1 616.8499999999999L1075.1999999999998 620.9499999999999L1071.1 625.05L1067.0 620.9499999999999Z" fill="none" stroke="#9a9a9a" stroke-width="1.2"/><path d="M1240.3 618.6999999999999L1236.8999999999999 621.9L1240.3 625.1" fill="none" stroke="#6e6e6e" stroke-width="1.1"/><path d="M1323.8999999999999 618.6999999999999L1327.3 621.9L1323.8999999999999 625.1" fill="none" stroke="#6e6e6e" stroke-width="1.1"/><path d="M1071.1 643.8499999999999L1075.1999999999998 647.9499999999999L1071.1 652.05L1067.0 647.9499999999999Z" fill="none" stroke="#9a9a9a" stroke-width="1.2"/><path d="M1240.3 645.6999999999999L1236.8999999999999 648.9L1240.3 652.1" fill="none" stroke="#6e6e6e" stroke-width="1.1"/><path d="M1323.8999999999999 645.6999999999999L1327.3 648.9L1323.8999999999999 652.1" fill="none" stroke="#6e6e6e" stroke-width="1.1"/><path d="M1071.1 669.8499999999999L1075.1999999999998 673.9499999999999L1071.1 678.05L1067.0 673.9499999999999Z" fill="none" stroke="#9a9a9a" stroke-width="1.2"/><path d="M1071.1 694.8499999999999L1075.1999999999998 698.9499999999999L1071.1 703.05L1067.0 698.9499999999999Z" fill="none" stroke="#9a9a9a" stroke-width="1.2"/><path d="M1698.8 697.5L1702.1 701.5L1705.3999999999999 697.5" fill="none" stroke="#e0e0e0" stroke-width="1.3"/><path d="M1071.1 719.8499999999999L1075.1999999999998 723.9499999999999L1071.1 728.05L1067.0 723.9499999999999Z" fill="none" stroke="#9a9a9a" stroke-width="1.2"/><path d="M1088.5 721.1L1091.9 724.3000000000001L1088.5 727.5000000000001" fill="none" stroke="#8c8c8c" stroke-width="1.1"/><g transform="translate(1668 724.3) scale(0.86)"><path d="M0 -6.7C-3 -6.6 -7.2 -5.4 -7.3 -3.6C-7.4 -1.2 7.4 1.2 7.4 3.8C7.3 5.6 3 6.6 0 6.8" fill="none" stroke="#7ec8c0" stroke-width="1.8" stroke-linecap="round"/><circle cx="0" cy="-6.7" r="1.9" fill="#ffffff"/><circle cx="0" cy="6.8" r="1.9" fill="#ffffff"/></g><path d="M1682.8 723.0L1686.1 727.0L1689.3999999999999 723.0" fill="none" stroke="#d8d8d8" stroke-width="1.3"/><g transform="translate(1703.3 723.7) rotate(45)"><path d="M-1.9 -3.2V6.6L0 9L1.9 6.6V-3.2Z" fill="none" stroke="#a8a8a8" stroke-width="1.2" stroke-linejoin="round"/><rect x="-2.6" y="-8.6" width="5.2" height="5.6" rx="2" fill="#a8a8a8"/><rect x="-3.6" y="-3.8" width="7.2" height="1.6" fill="#a8a8a8"/></g><path d="M1071.1 744.8499999999999L1075.1999999999998 748.9499999999999L1071.1 753.05L1067.0 748.9499999999999Z" fill="none" stroke="#9a9a9a" stroke-width="1.2"/><path d="M1698.8 747.5L1702.1 751.5L1705.3999999999999 747.5" fill="none" stroke="#e0e0e0" stroke-width="1.3"/><path d="M1071.1 769.8499999999999L1075.1999999999998 773.9499999999999L1071.1 778.05L1067.0 773.9499999999999Z" fill="none" stroke="#9a9a9a" stroke-width="1.2"/><path d="M1074 796.6V804.4L1078.2 800.5Z" fill="#e6e6e6"/></svg>
</body></html>
